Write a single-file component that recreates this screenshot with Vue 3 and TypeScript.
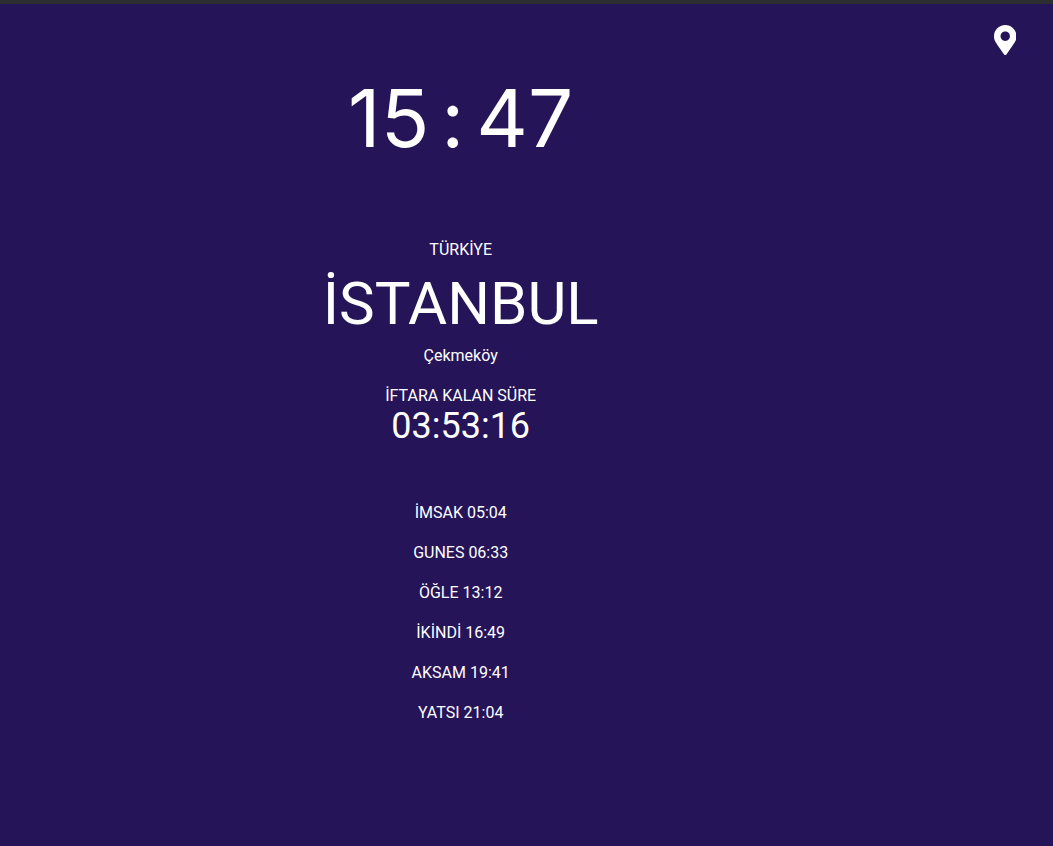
<script setup lang="ts">
interface PrayerTime {
  name: string
  time: string
}

const hours = '15'
const minutes = '47'
const country = 'TÜRKİYE'
const city = 'İSTANBUL'
const district = 'Çekmeköy'
const remaining = '03:53:16'

const times: PrayerTime[] = [
  { name: 'İMSAK', time: '05:04' },
  { name: 'GUNES', time: '06:33' },
  { name: 'ÖĞLE', time: '13:12' },
  { name: 'İKİNDİ', time: '16:49' },
  { name: 'AKSAM', time: '19:41' },
  { name: 'YATSI', time: '21:04' },
]
</script>

<template>
  <div class="page">
    <main class="content">
      <time class="clock">
        <span>{{ hours }}</span>
        <span>:</span>
        <span>{{ minutes }}</span>
      </time>
      <section class="place">
        <p>{{ country }}</p>
        <h1>{{ city }}</h1>
        <p>{{ district }}</p>
      </section>
      <section class="countdown">
        <p>İFTARA KALAN SÜRE</p>
        <time class="remaining">{{ remaining }}</time>
      </section>
      <ul class="times">
        <li v-for="t in times" :key="t.name">{{ t.name }} {{ t.time }}</li>
      </ul>
    </main>
    <aside class="side">
      <button class="pin" type="button" aria-label="Konum">
        <svg viewBox="0 0 384 512" aria-hidden="true">
          <path
            fill="currentColor"
            d="M172.268 501.670C26.970 291.031 0 269.413 0 192 0 85.961 85.961 0 192 0s192 85.961 192 192c0 77.413-26.970 99.031-172.268 309.670-9.535 13.774-29.930 13.773-39.464 0zM192 272c44.183 0 80-35.817 80-80s-35.817-80-80-80-80 35.817-80 80 35.817 80 80 80z"
          />
        </svg>
      </button>
    </aside>
  </div>
</template>

<style>
body {
  margin: 0;
  background: #251458;
}
</style>

<style scoped>
.page {
  display: grid;
  grid-template-columns: 7fr 1fr;
  box-sizing: border-box;
  min-height: 100vh;
  border-top: 4px solid #2b2f31;
  background: #251458;
  color: #fff;
  font-family: Roboto, Inter, "Liberation Sans", sans-serif;
  font-size: 16px;
  font-weight: 400;
  line-height: 24px;
}

.content {
  display: flex;
  flex-direction: column;
  align-items: center;
  padding-top: 54px;
  text-align: center;
}

p,
h1,
ul {
  margin: 0;
  padding: 0;
}

.clock {
  display: flex;
  gap: 12px;
  font-family: Inter, "Liberation Sans", sans-serif;
  font-size: 80px;
  line-height: 120px;
}

.place {
  margin-top: 60px;
}

h1 {
  padding-top: 2px;
  font-size: 60px;
  font-weight: 400;
  line-height: 80px;
}

.countdown {
  margin-top: 16px;
}

.remaining {
  display: block;
  font-size: 36px;
  line-height: 36px;
}

.times {
  display: grid;
  gap: 16px;
  margin-top: 57px;
  list-style: none;
}

.side {
  display: flex;
  align-items: flex-start;
  justify-content: flex-end;
  padding: 21px 37px 0 0;
}

.pin {
  padding: 0;
  border: 0;
  background: none;
  color: inherit;
  cursor: pointer;
}

.pin svg {
  display: block;
  height: 30px;
}
</style>
